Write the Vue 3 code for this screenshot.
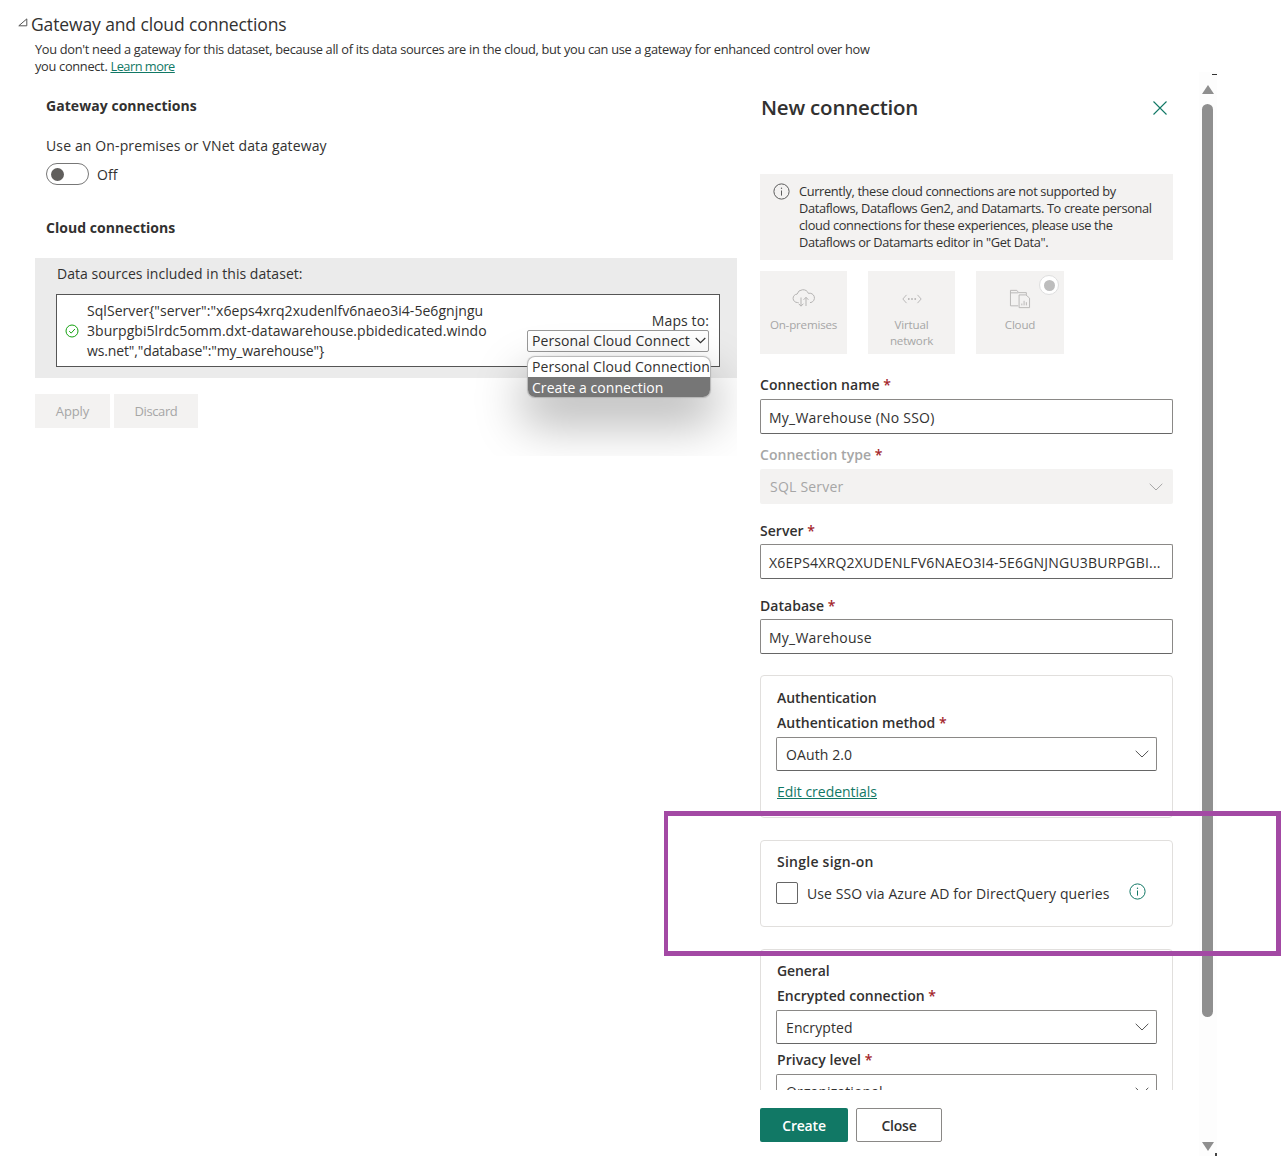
<script setup>
const tiles = [
  { key: 'prem', label: 'On-premises' },
  { key: 'vnet', label: 'Virtual network' },
  { key: 'cloud', label: 'Cloud' }
]
</script>

<template>
  <div class="page">
    <header class="head">
      <h1 class="head-title">
        <svg class="tri" width="10" height="9" viewBox="0 0 10 9"><path d="M.8 7.800H8.800V.9Z" fill="none" stroke="#555" stroke-width="1"/></svg>
        Gateway and cloud connections
      </h1>
      <p class="head-desc">You don't need a gateway for this dataset, because all of its data sources are in the cloud, but you can use a gateway for enhanced control over how you connect. <a class="link learn">Learn more</a></p>
    </header>

    <div class="main">
      <section class="left">
        <h2 class="sub first">Gateway connections</h2>
        <div class="use">Use an On-premises or VNet data gateway</div>
        <div class="toggle-row">
          <span class="toggle"><span class="knob"></span></span>
          <span>Off</span>
        </div>
        <h2 class="sub second">Cloud connections</h2>
        <div class="gray">
          <div class="gray-title">Data sources included in this dataset:</div>
          <div class="source">
            <svg class="ok" width="14" height="14" viewBox="0 0 14 14"><circle cx="7" cy="7" r="6" fill="none" stroke="#13a10e" stroke-width="1"/><path d="M4.200 7.200 6.200 9.100 9.900 5" fill="none" stroke="#13a10e" stroke-width="1"/></svg>
            <div class="source-text">SqlServer{"server":"x6eps4xrq2xudenlfv6naeo3i4-5e6gnjngu<br>3burpgbi5lrdc5omm.dxt-datawarehouse.pbidedicated.windo<br><span class="last-line">ws.net","database":"my_warehouse"}</span></div>
            <div class="maps">
              <div class="maps-label">Maps to:</div>
              <div class="maps-select">
                <span>Personal Cloud Connect</span>
                <svg width="11" height="7" viewBox="0 0 11 7"><path d="M.7 1 5.500 5.600 10.300 1" fill="none" stroke="#333" stroke-width="1.200"/></svg>
              </div>
            </div>
            <div class="popup">
              <div class="opt">Personal Cloud Connection</div>
              <div class="opt sel">Create a connection</div>
            </div>
          </div>
        </div>
        <div class="left-actions">
          <button class="btn-dis">Apply</button>
          <button class="btn-dis">Discard</button>
        </div>
      </section>

      <section class="panel">
        <div class="scroll">
          <div class="panel-head">
            <h2 class="panel-title">New connection</h2>
            <svg class="x" width="16" height="16" viewBox="0 0 16 16"><path d="M1.500 1.500 14.500 14.500M14.500 1.500 1.500 14.500" stroke="#117865" stroke-width="1.100" fill="none"/></svg>
          </div>
          <div class="banner">
            <svg class="banner-i" width="17" height="17" viewBox="0 0 17 17"><circle cx="8.500" cy="8.500" r="7.600" fill="none" stroke="#5c5c5c"/><path d="M8.500 7.500V12.600" stroke="#5c5c5c"/><circle cx="8.500" cy="5.300" r=".7" fill="#5c5c5c"/></svg>
            <div>Currently, these cloud connections are not supported by Dataflows, Dataflows Gen2, and Datamarts. To create personal cloud connections for these experiences, please use the Dataflows or Datamarts editor in "Get Data".</div>
          </div>
          <div class="tiles">
            <div v-for="t in tiles" :key="t.key" class="tile" :class="'tile-' + t.key">
              <svg v-if="t.key === 'prem'" width="24" height="20" viewBox="0 0 24 20" fill="none" stroke="#b5b4b3"><path d="M6.500 13.500H5.500a4.200 4.200 0 0 1-.4-8.400A6 6 0 0 1 16.400 4.400a4.600 4.600 0 0 1 2.600 9.100h-1"/><path d="M9 8.500V17M6.600 14.700 9 17.200l2.400-2.500M14 17V8.500M11.600 10.800 14 8.300l2.400 2.500"/></svg>
              <svg v-else-if="t.key === 'vnet'" width="22" height="20" viewBox="0 0 24 20" fill="none" stroke="#b5b4b3"><path d="M6 5.500 2 10l4 4.500M18 5.500 22 10l-4 4.500"/><circle cx="8.500" cy="10" r="1" fill="#b5b4b3" stroke="none"/><circle cx="12" cy="10" r="1" fill="#b5b4b3" stroke="none"/><circle cx="15.500" cy="10" r="1" fill="#b5b4b3" stroke="none"/></svg>
              <svg v-else width="24" height="22" viewBox="0 0 24 22" fill="none" stroke="#b5b4b3"><path d="M10 18.500H1.500V1.500h7l2 2.500h8.500v2.500M1.500 4.200H10"/><path d="M11 6.500h7.500l4 3.500v10.500H11z"/><path d="M14 18v-2M16.500 18v-5M19 18v-3.500"/></svg>
              <div class="tile-label">{{ t.label }}</div>
              <span v-if="t.key === 'cloud'" class="radio"><span class="radio-dot"></span></span>
            </div>
          </div>

          <label class="lab lab-name">Connection name <b>*</b></label>
          <div class="field">My_Warehouse (No SSO)</div>
          <label class="lab lab-type dim">Connection type <b>*</b></label>
          <div class="field disabled">
            <span>SQL Server</span>
            <svg width="14" height="8" viewBox="0 0 14 8"><path d="M.7.8 7 7 13.300.8" fill="none" stroke="#a6a6a6"/></svg>
          </div>
          <label class="lab lab-next">Server <b>*</b></label>
          <div class="field">X6EPS4XRQ2XUDENLFV6NAEO3I4-5E6GNJNGU3BURPGBI...</div>
          <label class="lab lab-next">Database <b>*</b></label>
          <div class="field">My_Warehouse</div>

          <div class="card card-auth">
            <div class="card-title">Authentication</div>
            <label class="lab lab-card">Authentication method <b>*</b></label>
            <div class="field sel-field">
              <span>OAuth 2.0</span>
              <svg width="14" height="8" viewBox="0 0 14 8"><path d="M.7.8 7 7 13.300.8" fill="none" stroke="#555"/></svg>
            </div>
            <a class="link edit">Edit credentials</a>
          </div>

          <div class="card card-sso">
            <div class="card-title sso-title">Single sign-on</div>
            <div class="sso-row">
              <span class="check"></span>
              <span class="sso-text">Use SSO via Azure AD for DirectQuery queries</span>
              <svg class="sso-info" width="17" height="17" viewBox="0 0 17 17"><circle cx="8.500" cy="8.500" r="7.600" fill="none" stroke="#117865"/><path d="M8.500 7.500V12.600" stroke="#117865"/><circle cx="8.500" cy="5.300" r=".7" fill="#117865"/></svg>
            </div>
          </div>

          <div class="card card-gen">
            <div class="card-title">General</div>
            <label class="lab lab-card">Encrypted connection <b>*</b></label>
            <div class="field sel-field">
              <span>Encrypted</span>
              <svg width="14" height="8" viewBox="0 0 14 8"><path d="M.7.8 7 7 13.300.8" fill="none" stroke="#555"/></svg>
            </div>
            <label class="lab lab-priv">Privacy level <b>*</b></label>
            <div class="field sel-field">
              <span>Organizational</span>
              <svg width="14" height="8" viewBox="0 0 14 8"><path d="M.7.8 7 7 13.300.8" fill="none" stroke="#555"/></svg>
            </div>
          </div>
        </div>
        <div class="panel-actions">
          <button class="btn-create">Create</button>
          <button class="btn-close">Close</button>
        </div>
      </section>

      <aside class="sbar">
        <span class="dash"></span>
        <span class="arrow up"></span>
        <span class="thumb"></span>
        <span class="arrow down"></span>
        <span class="corner"></span>
      </aside>
    </div>

    <div class="highlight"></div>
  </div>
</template>

<style>
html, body { margin: 0; background: #fff; }
</style>

<style scoped>
.page {
  position: relative;
  width: 1288px;
  height: 1161px;
  overflow: hidden;
  background: #fff;
  color: #323130;
  font-family: "Open Sans", "Noto Sans", sans-serif;
  font-size: 14px;
  letter-spacing: 0.1px;
}
.head { padding: 13px 0 0 18px; height: 72px; box-sizing: border-box; }
.head-title { margin: 0; display: flex; align-items: center; gap: 3px; font-size: 17.5px; font-weight: 400; line-height: 22px; letter-spacing: -0.12px; }
.tri { flex: none; margin-top: -4px; }
.head-desc { margin: 6px 0 0 17px; width: 840px; font-size: 12.8px; line-height: 17px; letter-spacing: -0.3px; }
.link { color: #117865; text-decoration: underline; }
.learn { letter-spacing: -0.5px; }

.main { display: flex; height: 1089px; }
.left { width: 702px; height: 384px; margin-left: 35px; overflow: hidden; flex: none; }
.sub { margin: 0 0 0 11px; font-size: 14px; line-height: 20px; font-weight: 700; letter-spacing: 0.05px; }
.sub.first { margin-top: 24px; }
.sub.second { margin-top: 33px; }
.use { margin: 20px 0 0 11px; line-height: 20px; letter-spacing: 0.13px; }
.toggle-row { margin: 7px 0 0 11px; display: flex; align-items: center; gap: 8px; height: 22px; }
.toggle { width: 37px; height: 20px; border: 1px solid #777; border-radius: 11px; display: flex; align-items: center; padding-left: 4px; box-sizing: content-box; }
.knob { width: 13px; height: 13px; border-radius: 50%; background: #605e5c; }
.gray { margin-top: 20px; height: 120px; background: #ebebeb; padding: 6px 17px 0 21px; box-sizing: border-box; }
.gray-title { line-height: 20px; margin-left: 1px; letter-spacing: 0.05px; }
.source { position: relative; margin-top: 10px; height: 73px; background: #fff; border: 1px solid #555; box-sizing: border-box; display: flex; align-items: center; padding: 0 10px 0 8px; }
.ok { flex: none; margin-right: 8px; }
.source-text { line-height: 20px; white-space: nowrap; letter-spacing: 0.05px; flex: 1; }
.last-line { letter-spacing: -0.13px; }
.maps { display: flex; flex-direction: column; align-items: flex-end; margin-top: 2px; }
.maps-label { line-height: 18px; }
.maps-select { width: 182px; height: 22px; border: 1px solid #999; border-radius: 2px; box-sizing: border-box; display: flex; align-items: center; justify-content: space-between; padding: 0 2px 0 4px; background: #fff; white-space: nowrap; overflow: hidden; letter-spacing: 0.08px; }
.popup { position: absolute; left: 471px; top: 62px; width: 182px; height: 40px; border-radius: 7px; overflow: hidden; background: #fff; box-shadow: 0 0 1px 1px #b5b5b5, 0 22px 48px 6px rgba(0,0,0,.28); z-index: 2; }
.opt { height: 20px; line-height: 20px; padding-left: 4px; white-space: nowrap; letter-spacing: 0.05px; }
.opt.sel { background: #767676; color: #fff; line-height: 22px; }
.left-actions { display: flex; gap: 4px; margin-top: 16px; }
.btn-dis { width: 75px; height: 34px; border: 0; background: #f3f2f1; color: #a6a6a6; font: inherit; font-size: 13px; letter-spacing: -0.1px; padding: 0; }
.btn-dis + .btn-dis { width: 84px; letter-spacing: -0.4px; }

.panel { width: 413px; margin-left: 23px; flex: none; display: flex; flex-direction: column; }
.scroll { height: 1018px; overflow: hidden; flex: none; }
.panel-head { display: flex; justify-content: space-between; align-items: center; height: 36px; margin-top: 17px; padding-right: 5px; }
.panel-title { margin: 0 0 0 1px; font-size: 20.5px; font-weight: 600; letter-spacing: -0.2px; line-height: 28px; }
.x { margin-top: 1px; }
.banner { margin-top: 49px; height: 86px; background: #f3f2f1; padding: 9px 12px 0 13px; box-sizing: border-box; display: flex; gap: 9px; font-size: 12.8px; line-height: 17px; letter-spacing: -0.35px; }
.banner-i { flex: none; }
.tiles { display: flex; gap: 21px; margin-top: 11px; }
.tile { position: relative; width: 87px; height: 83px; background: #f3f2f1; display: flex; flex-direction: column; align-items: center; padding-top: 18px; box-sizing: border-box; color: #a6a6a6; font-size: 11.6px; letter-spacing: -0.2px; text-align: center; line-height: 16px; }
.tile svg { height: 20px; flex: none; }
.tile-label { margin-top: 8px; width: 70px; }
.tile-cloud { width: 88px; }
.radio { position: absolute; top: 4px; right: 5px; width: 20px; height: 20px; border-radius: 50%; background: #fff; border: 1px solid #dedede; box-sizing: border-box; display: flex; align-items: center; justify-content: center; }
.radio-dot { width: 11px; height: 11px; border-radius: 50%; background: #bdbdbd; }

.lab { display: block; line-height: 20px; font-weight: 600; letter-spacing: 0.03px; }
.lab b { color: #a4262c; font-weight: 600; }
.lab.dim { color: #a6a6a6; }
.lab-name { margin-top: 21px; margin-bottom: 4px; }
.lab-type { margin-top: 11px; margin-bottom: 4px; }
.lab-next { margin-top: 17px; margin-bottom: 3px; }
.field { height: 35px; box-sizing: border-box; border: 1px solid #8a8886; border-bottom-color: #666; border-radius: 2px; padding: 1px 8px 0; display: flex; align-items: center; justify-content: space-between; white-space: nowrap; overflow: hidden; letter-spacing: 0.22px; }
.field.disabled { border: 0; background: #f3f2f1; color: #a6a6a6; padding: 0 10px; }
.card { border: 1px solid #e1dfdd; border-radius: 4px; box-sizing: border-box; padding: 0 15px; }
.card-auth { margin-top: 21px; height: 143px; padding-top: 12px; }
.card-sso { margin-top: 22px; height: 87px; padding-top: 11px; }
.card-gen { margin-top: 22px; height: 200px; padding-top: 11px; }
.card-title { margin-left: 1px; font-weight: 600; line-height: 20px; letter-spacing: -0.1px; }
.sso-title { letter-spacing: 0.25px; }
.lab-card { margin: 5px 0 4px 1px; }
.lab-priv { margin: 6px 0 4px 1px; }
.sel-field { height: 34px; padding: 0 7px 0 9px; letter-spacing: 0.1px; }
.edit { display: block; margin: 11px 0 0 1px; line-height: 20px; letter-spacing: -0.02px; }
.sso-row { display: flex; align-items: center; margin-top: 10px; }
.check { width: 22px; height: 22px; border: 1px solid #666; border-radius: 2px; box-sizing: border-box; flex: none; margin-right: 9px; }
.sso-text { margin-right: 20px; white-space: nowrap; }
.sso-info { margin-top: -3px; }
.panel-actions { display: flex; gap: 8px; margin-top: 18px; }
.btn-create, .btn-close { height: 34px; border-radius: 2px; font: inherit; font-weight: 600; letter-spacing: -0.2px; padding: 0; }
.btn-create { width: 88px; border: 0; background: #117865; color: #fff; }
.btn-close { width: 86px; background: #fff; border: 1px solid #8a8886; color: #323130; }

.sbar { position: relative; width: 18px; margin-left: 26px; flex: none; background: #fdfdfd; height: 1084px; }
.dash { position: absolute; left: 13px; top: 2px; width: 5px; height: 1px; background: #333; }
.corner { position: absolute; left: 16px; top: 1081px; width: 2px; height: 3px; background: #444; }
.thumb { position: absolute; left: 3px; top: 32px; width: 11px; height: 913px; border-radius: 6px; background: #8f8f8f; }
.arrow { position: absolute; left: 3px; width: 0; height: 0; border-left: 6px solid transparent; border-right: 6px solid transparent; }
.arrow.up { top: 13px; border-bottom: 9px solid #8f8f8f; }
.arrow.down { top: 1070px; border-top: 9px solid #8f8f8f; }

.highlight { position: absolute; left: 664px; top: 811px; width: 617px; height: 145px; box-sizing: border-box; border: 5px solid #a349a4; border-left-width: 4px; pointer-events: none; }
</style>
